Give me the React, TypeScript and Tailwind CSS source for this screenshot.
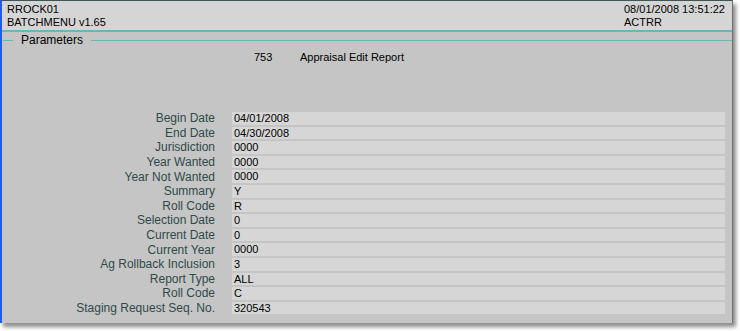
import React from 'react'

const rows: [string, string][] = [
  ['Begin Date', '04/01/2008'],
  ['End Date', '04/30/2008'],
  ['Jurisdiction', '0000'],
  ['Year Wanted', '0000'],
  ['Year Not Wanted', '0000'],
  ['Summary', 'Y'],
  ['Roll Code', 'R'],
  ['Selection Date', '0'],
  ['Current Date', '0'],
  ['Current Year', '0000'],
  ['Ag Rollback Inclusion', '3'],
  ['Report Type', 'ALL'],
  ['Roll Code', 'C'],
  ['Staging Request Seq. No.', '320543'],
]

export default function App() {
  return (
    <div className="w-[740px] h-[331px] bg-white overflow-hidden" style={{ fontFamily: '"Liberation Sans", Arial, sans-serif' }}>
      <div className="w-[733px] h-[323px] bg-[#c5c5c5] border-t border-t-[#3d5555] border-l-2 border-l-[#1e5cf0] border-r border-r-[#6e6e6e] shadow-[3px_4px_4px_rgba(0,0,0,0.45)] flex flex-col">
        {/* header */}
        <div className="h-[31px] bg-[#d5d5d5] border-b-2 border-b-[#66b8b8] flex justify-between pl-[5px] pr-0 pt-[2px] text-[11px] leading-[13px] text-black whitespace-nowrap">
          <div>
            <div>RROCK01</div>
            <div>BATCHMENU v1.65</div>
          </div>
          <div className="w-[108px]">
            <div>08/01/2008 13:51:22</div>
            <div>ACTRR</div>
          </div>
        </div>

        {/* group box title */}
        <div className="flex items-center h-[14px] mt-[1px]">
          <div className="w-[10px] h-px bg-[#66b8b8] ml-px" />
          <div className="px-[8px] text-[12px] leading-[14px] text-black">Parameters</div>
          <div className="flex-1 h-px bg-[#66b8b8]" />
        </div>

        <div className="flex mt-[3px] text-[11px] leading-[14px] text-black">
          <div className="ml-[252px] w-[46px]">753</div>
          <div>Appraisal Edit Report</div>
        </div>

        {/* parameter rows */}
        <div className="flex flex-col gap-[2px] mt-[48px]">
          {rows.map(([label, value], i) => (
            <div key={i} className="flex items-center h-[12.6px]">
              <div className="w-[213px] text-right text-[12px] leading-[12px] text-[#2f4a4a] whitespace-nowrap">{label}</div>
              <div className="ml-[17px] w-[493px] h-full bg-[#d6d6d6] pl-[2px] text-[11px] leading-[13px] text-black">{value}</div>
            </div>
          ))}
        </div>
      </div>
    </div>
  )
}
